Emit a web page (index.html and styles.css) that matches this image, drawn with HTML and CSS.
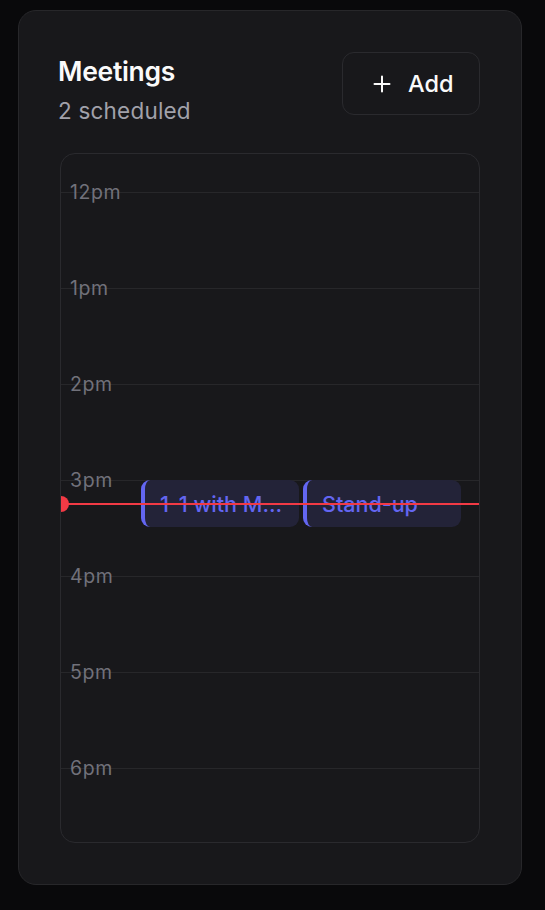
FILE: index.html
```html
<!DOCTYPE html>
<html lang="en">
<head>
<meta charset="utf-8">
<title>Meetings</title>
<link rel="stylesheet" href="styles.css">
</head>
<body>
  <section class="card">
    <header class="card-header">
      <div class="heading">
        <h1 class="title">Meetings</h1>
        <p class="subtitle">2 scheduled</p>
      </div>
      <button class="add-btn" type="button">
        <svg class="plus" width="18" height="18" viewBox="0 0 18 18" aria-hidden="true">
          <path d="M9 1.5v15M1.5 9h15" fill="none" stroke="currentColor" stroke-width="2" stroke-linecap="round"/>
        </svg>
        <span>Add</span>
      </button>
    </header>

    <div class="calendar">
      <div class="hours">
        <div class="hour"><span class="hour-label">12pm</span></div>
        <div class="hour"><span class="hour-label">1pm</span></div>
        <div class="hour"><span class="hour-label">2pm</span></div>
        <div class="hour"><span class="hour-label">3pm</span></div>
        <div class="hour"><span class="hour-label">4pm</span></div>
        <div class="hour"><span class="hour-label">5pm</span></div>
        <div class="hour"><span class="hour-label">6pm</span></div>
      </div>

      <div class="event" style="top: 326px; left: 80px;">
        <span class="event-title">1-1 with Maya Chen</span>
      </div>
      <div class="event" style="top: 326px; left: 242px;">
        <span class="event-title">Stand-up</span>
      </div>

      <div class="now-line" style="top: 349px;">
        <span class="now-dot"></span>
      </div>
    </div>
  </section>
</body>
</html>
```

FILE: styles.css
```css
* {
  box-sizing: border-box;
}

html, body {
  margin: 0;
  padding: 0;
  background: #09090b;
}

body {
  padding: 10px 18px;
  font-family: "Inter", "Noto Sans", "Liberation Sans", sans-serif;
  color: #fafafa;
}

.card {
  width: 504px;
  background: #18181b;
  border: 1px solid #27272a;
  border-radius: 18px;
  padding: 41px;
}

.card-header {
  display: flex;
  justify-content: space-between;
  align-items: flex-start;
}

.heading {
  margin-left: -2px;
}

.title {
  margin: 3px 0 0;
  font-size: 26.5px;
  line-height: 33px;
  font-weight: 600;
  color: #fafafa;
  letter-spacing: -0.3px;
}

.subtitle {
  margin: 9px 0 0;
  font-size: 22.5px;
  line-height: 27px;
  color: #a1a1aa;
  letter-spacing: 0.2px;
}

.add-btn {
  display: flex;
  align-items: center;
  gap: 17px;
  width: 138px;
  height: 63px;
  padding: 0 0 0 30px;
  background: transparent;
  border: 1px solid #2a2a2e;
  border-radius: 12px;
  color: #fafafa;
  font-family: inherit;
  font-size: 23.5px;
  font-weight: 500;
  cursor: pointer;
}

.plus {
  display: block;
  flex: none;
}

.calendar {
  position: relative;
  margin-top: 29px;
  height: 690px;
  border: 1px solid #2a2a2e;
  border-radius: 15px;
  overflow: hidden;
}

.hours {
  padding-top: 38px;
}

.hour {
  height: 96px;
  border-top: 1px solid #27272a;
  padding-left: 9px;
}

.hour-label {
  display: block;
  width: max-content;
  font-size: 19.5px;
  line-height: 24px;
  color: #71717a;
  letter-spacing: 0.6px;
  transform: translateY(-13px);
}

.event {
  position: absolute;
  width: 158px;
  height: 47px;
  display: flex;
  align-items: center;
  padding: 0 14px 0 15px;
  background: #232338;
  border-left: 4px solid #6366f1;
  border-radius: 9px;
}

.event-title {
  display: block;
  min-width: 0;
  font-size: 21.5px;
  line-height: 26px;
  font-weight: 500;
  color: #6366f1;
  white-space: nowrap;
  overflow: hidden;
  text-overflow: ellipsis;
}

.now-line {
  position: absolute;
  left: 0;
  right: 0;
  height: 2px;
  background: #f23a45;
}

.now-dot {
  position: absolute;
  left: -8px;
  top: -7px;
  width: 16px;
  height: 16px;
  border-radius: 50%;
  background: #f23a45;
}
```
